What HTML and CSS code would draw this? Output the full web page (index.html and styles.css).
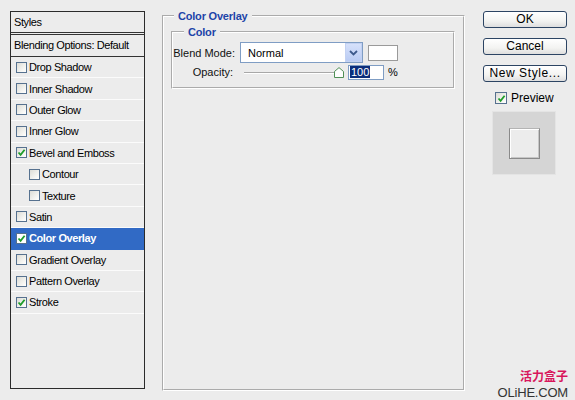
FILE: index.html
```html
<!DOCTYPE html>
<html>
<head>
<meta charset="utf-8">
<link rel="stylesheet" href="styles.css">
</head>
<body>
<div class="dialog">
  <div class="styles-panel">
    <div class="panel-head">Styles</div>
    <div class="panel-blend">Blending Options: Default</div>
    <ul class="fx-list">
      <li class="fx"><span class="cb"></span><span class="fx-name">Drop Shadow</span></li>
      <li class="fx"><span class="cb"></span><span class="fx-name">Inner Shadow</span></li>
      <li class="fx"><span class="cb"></span><span class="fx-name">Outer Glow</span></li>
      <li class="fx"><span class="cb"></span><span class="fx-name">Inner Glow</span></li>
      <li class="fx"><span class="cb checked"><svg viewBox="0 0 9 9" width="9" height="9"><path d="M1.5 4.5 L3.6 6.8 L7.6 1.8" fill="none" stroke="#1f9d2a" stroke-width="1.8"/></svg></span><span class="fx-name">Bevel and Emboss</span></li>
      <li class="fx sub"><span class="cb"></span><span class="fx-name">Contour</span></li>
      <li class="fx sub"><span class="cb"></span><span class="fx-name">Texture</span></li>
      <li class="fx"><span class="cb"></span><span class="fx-name">Satin</span></li>
      <li class="fx selected"><span class="cb checked"><svg viewBox="0 0 9 9" width="9" height="9"><path d="M1.5 4.5 L3.6 6.8 L7.6 1.8" fill="none" stroke="#1f9d2a" stroke-width="1.8"/></svg></span><span class="fx-name">Color Overlay</span></li>
      <li class="fx"><span class="cb"></span><span class="fx-name">Gradient Overlay</span></li>
      <li class="fx"><span class="cb"></span><span class="fx-name">Pattern Overlay</span></li>
      <li class="fx"><span class="cb checked"><svg viewBox="0 0 9 9" width="9" height="9"><path d="M1.5 4.5 L3.6 6.8 L7.6 1.8" fill="none" stroke="#1f9d2a" stroke-width="1.8"/></svg></span><span class="fx-name">Stroke</span></li>
    </ul>
  </div>

  <fieldset class="group">
    <legend class="group-title">Color Overlay</legend>
    <fieldset class="subgroup">
      <legend class="group-title sub-title">Color</legend>
      <div class="form-grid">
        <span class="label">Blend Mode:</span>
        <div class="ctrl-row">
          <div class="select"><span class="select-value">Normal</span><span class="select-btn"><svg viewBox="0 0 9 6" width="9" height="6"><path d="M1 1 L4.5 4.5 L8 1" fill="none" stroke="#3d5a8c" stroke-width="1.8"/></svg></span></div>
          <span class="swatch"></span>
        </div>
        <span class="label label-opacity">Opacity:</span>
        <div class="ctrl-row">
          <div class="slider"><span class="track"></span><span class="thumb"><svg viewBox="0 0 10 11" width="10" height="11"><path d="M0.5 4.5 L5 0.6 L9.5 4.5 L9.5 10.5 L0.5 10.5 Z" fill="#fdfdfd" stroke="#4f8f55" stroke-width="1"/></svg></span></div>
          <span class="num"><span class="num-sel">100</span></span>
          <span class="pct">%</span>
        </div>
      </div>
    </fieldset>
  </fieldset>

  <div class="actions">
    <button class="btn">OK</button>
    <button class="btn">Cancel</button>
    <button class="btn btn-wide">New Style...</button>
    <div class="preview-toggle"><span class="cb checked"><svg viewBox="0 0 9 9" width="9" height="9"><path d="M1.5 4.5 L3.6 6.8 L7.6 1.8" fill="none" stroke="#1f9d2a" stroke-width="1.8"/></svg></span><span>Preview</span></div>
    <div class="preview-box"><span class="preview-swatch"></span></div>
  </div>

  <div class="watermark">
    <div class="wm-cn">活力盒子</div>
    <div class="wm-en">OLiHE.COM</div>
  </div>
</div>
</body>
</html>
```

FILE: styles.css
```css
* { box-sizing: border-box; }

body {
  margin: 0;
  background: #ececec;
  font-family: "Liberation Sans", Arial, sans-serif;
  font-size: 11px;
  color: #000;
}

.dialog {
  position: relative;
  width: 575px;
  height: 400px;
  display: flex;
  align-items: flex-start;
  padding: 11px 0 0 10px;
}

/* ---------- left styles list ---------- */
.styles-panel {
  width: 135px;
  height: 378px;
  border: 1px solid #2b2b2b;
  background: #ececec;
  display: flex;
  flex-direction: column;
  letter-spacing: -0.4px;
}

.panel-head {
  height: 23px;
  padding-left: 3px;
  line-height: 20px;
  border-bottom: 3px double #333;
}

.panel-blend {
  height: 22px;
  padding-left: 3px;
  line-height: 21px;
  border-bottom: 1px solid #333;
}

.fx-list {
  list-style: none;
  margin: 0;
  padding: 0;
}

.fx {
  height: 21.4px;
  display: flex;
  align-items: center;
  gap: 2px;
  padding-left: 5px;
  border-bottom: 1px solid #fbfbfb;
}

.fx.sub { padding-left: 18px; }

.fx.selected {
  background: #316ac5;
  color: #fff;
  font-weight: bold;
  border-bottom-color: #316ac5;
}

.cb {
  width: 11px;
  height: 11px;
  flex: none;
  border: 1px solid #56718f;
  background: linear-gradient(135deg, #dcdcd6 0%, #f6f6f3 70%, #ffffff 100%);
  display: flex;
  align-items: center;
  justify-content: center;
}

.fx.selected .cb { background: #fff; }

/* ---------- main group ---------- */
.group {
  margin: 0 0 0 17px;
  width: 303px;
  height: 380px;
  border: 2px groove #ffffff;
  padding: 6px 0 0 7px;
  min-width: 0;
}

.group-title {
  margin-left: 3px;
  padding: 0 4px;
  line-height: 10px;
  font-weight: bold;
  color: #1d44a8;
  letter-spacing: -0.2px;
}

.subgroup {
  margin: 0;
  width: 284px;
  height: 62px;
  border: 2px groove #ffffff;
  padding: 0;
  min-width: 0;
}

.sub-title { margin-left: 11px; }

.form-grid {
  display: grid;
  grid-template-columns: 62px auto;
  grid-template-rows: 21px 18px;
  column-gap: 5px;
  align-items: center;
  padding-top: 5px;
}

.label {
  text-align: right;
  color: #111;
}

.label-opacity { padding-right: 2px; }

.ctrl-row {
  display: flex;
  align-items: center;
}

.select {
  width: 123px;
  height: 21px;
  border: 1px solid #7f9dc4;
  background: #fff;
  display: flex;
  align-items: center;
  justify-content: space-between;
}

.select-value { padding-left: 7px; }

.select-btn {
  width: 17px;
  height: 19px;
  background: linear-gradient(#d6e1fb, #b9cbf3);
  border: 1px solid #c2d1f2;
  display: flex;
  align-items: center;
  justify-content: center;
}

.swatch {
  width: 30px;
  height: 16px;
  margin-left: 5px;
  background: #fff;
  border: 1px solid #9a9a9a;
}

.slider {
  position: relative;
  width: 100px;
  height: 12px;
  margin-left: 4px;
}

.track {
  position: absolute;
  left: 0;
  right: 6px;
  top: 6px;
  height: 2px;
  border-top: 1px solid #a8a8a8;
  border-bottom: 1px solid #ffffff;
}

.thumb {
  position: absolute;
  right: 0;
  top: 1px;
  width: 10px;
  height: 11px;
  display: flex;
}

.num {
  width: 36px;
  height: 15px;
  margin-left: 4px;
  border: 1px solid #7f9dc4;
  background: #fff;
  display: flex;
  align-items: center;
  padding-left: 1px;
}

.num-sel {
  background: #0b2d7a;
  color: #fff;
  line-height: 12px;
  padding: 0 1px;
}

.pct { margin-left: 4px; }

/* ---------- right column ---------- */
.actions {
  width: 84px;
  margin-left: 18px;
  display: flex;
  flex-direction: column;
  gap: 10px;
}

.btn {
  height: 17px;
  padding: 0;
  border: 1px solid #2c4463;
  border-radius: 3px;
  background: linear-gradient(#ffffff 0%, #f3f3f1 60%, #dedede 100%);
  font-family: "Liberation Sans", Arial, sans-serif;
  font-size: 12px;
  line-height: 15px;
  color: #000;
}

.btn-wide { letter-spacing: 0.6px; }

.preview-toggle {
  display: flex;
  align-items: center;
  gap: 4px;
  padding-left: 12px;
  font-size: 12px;
  height: 12px;
}

.preview-toggle .cb { width: 12px; height: 12px; }

.preview-box {
  width: 64px;
  height: 64px;
  margin: -3px 0 0 9px;
  background: #d5d5d5;
  border: 1px solid #e4e4e4;
  display: flex;
  align-items: center;
  justify-content: center;
}

.preview-swatch {
  width: 31px;
  height: 31px;
  background: #ececec;
  border: 1px solid #8a8a8a;
  border-top-color: #b4b4b4;
  box-shadow: inset 1px 1px 0 #ffffff, inset -1px -1px 0 #c6c6c6;
}

/* ---------- watermark ---------- */
.watermark {
  position: absolute;
  right: 7px;
  top: 367px;
  text-align: right;
  display: flex;
  flex-direction: column;
  align-items: flex-end;
  gap: 1px;
}

.wm-cn {
  font-family: "Noto Sans CJK SC", sans-serif;
  font-weight: bold;
  font-size: 12px;
  line-height: 17px;
  color: #d8155b;
}

.wm-en {
  font-family: "Liberation Sans", Arial, sans-serif;
  font-size: 13px;
  line-height: 15px;
  color: #333;
  letter-spacing: -0.2px;
}
```
